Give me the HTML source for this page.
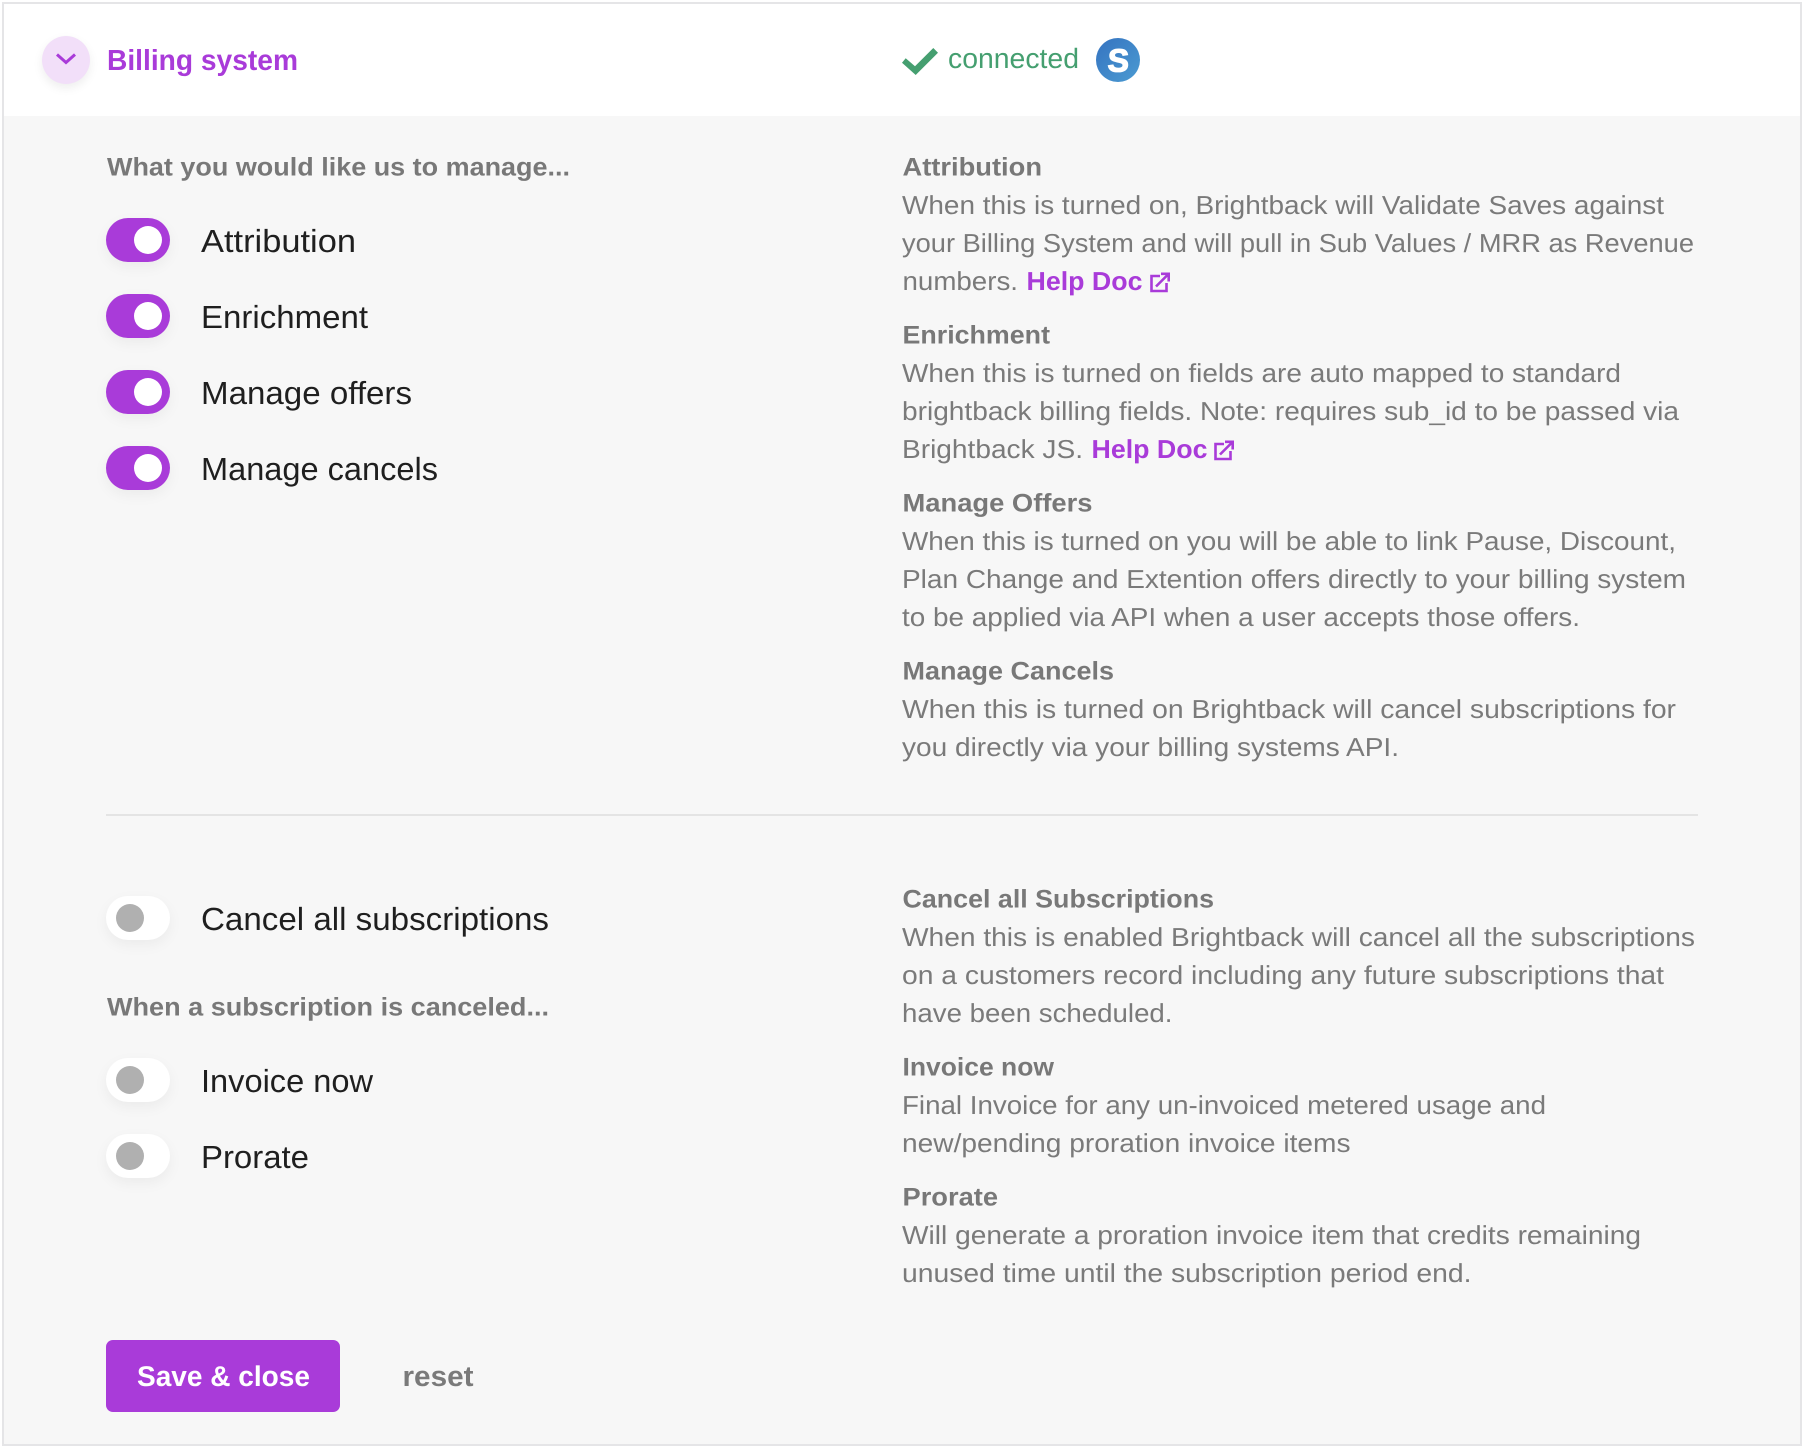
<!DOCTYPE html>
<html lang="en">
<head>
<meta charset="utf-8">
<title>Billing system</title>
<style>
html,body{margin:0;padding:0;width:1802px;height:1446px;overflow:hidden;background:#fff}
#panel{position:absolute;left:2px;top:2px;width:1796px;height:1440px;border:2px solid #e5e5e7;background:#f7f7f7}
#head{position:absolute;left:4px;top:4px;width:1796px;height:112px;background:#fff}
.t{position:absolute;left:106px;width:64px;height:44px;border-radius:22px;box-shadow:0 5px 14px rgba(0,0,0,.05)}
.t i{position:absolute;top:8px;width:28px;height:28px;border-radius:50%;display:block}
.on{background:#a93bd9}.on i{left:28px;background:#fff}
.off{background:#fff}.off i{left:10px;background:#b0b0b0}
#chev{position:absolute;left:42px;top:36px;width:48px;height:48px;border-radius:50%;background:#f2dff9;box-shadow:0 4px 10px rgba(0,0,0,.07)}
#btn{position:absolute;left:106px;top:1340px;width:234px;height:72px;border-radius:7px;background:#a93bd9}
svg{position:absolute;left:0;top:0}
text{font-family:"Liberation Sans",Arial,sans-serif;text-rendering:geometricPrecision}
.b{font-size:26px;fill:#7a7a7a}
.h{font-size:25.5px;font-weight:700;fill:#787878}
.l{font-size:32px;fill:#1f1f1f}
.p{font-size:26px;font-weight:700;fill:#a93bd9}
</style>
</head>
<body>
<div id="panel"></div>
<div id="head"></div>
<div id="chev"></div>
<div class="t on" style="top:218px"><i></i></div>
<div class="t on" style="top:294px"><i></i></div>
<div class="t on" style="top:370px"><i></i></div>
<div class="t on" style="top:446px"><i></i></div>
<div class="t off" style="top:896px"><i></i></div>
<div class="t off" style="top:1058px"><i></i></div>
<div class="t off" style="top:1134px"><i></i></div>
<div id="btn"></div>
<svg width="1802" height="1446" viewBox="0 0 1802 1446" xmlns="http://www.w3.org/2000/svg">
<defs>
<linearGradient id="g" x1="0" y1="0" x2="1" y2="1"><stop offset="0" stop-color="#3573c0"/><stop offset="1" stop-color="#4b9bd2"/></linearGradient>
</defs>

<path d="M57 54.5 L66 62.5 L75 54.5" fill="none" stroke="#a93bd9" stroke-width="3"/>
<text x="107" y="70" font-size="29" font-weight="700" fill="#a93bd9" textLength="191" lengthAdjust="spacingAndGlyphs">Billing system</text>

<polygon points="902,62.7 905.7,58.3 915,66.2 933.3,48 938,52.7 915.7,75" fill="#459f70"/>
<text x="948" y="68" font-size="28" fill="#459f70" textLength="131" lengthAdjust="spacingAndGlyphs">connected</text>
<circle cx="1118" cy="60" r="22" fill="url(#g)"/>
<text x="1118" y="71.5" font-size="32" font-weight="700" fill="#fff" stroke="#fff" stroke-width="1.2" text-anchor="middle" transform="translate(3 0) skewX(-2.5)">S</text>

<!-- left column -->
<text class="h" x="107" y="175.5" textLength="463" lengthAdjust="spacingAndGlyphs">What you would like us to manage...</text>
<text class="l" x="201" y="252" textLength="155" lengthAdjust="spacingAndGlyphs">Attribution</text>
<text class="l" x="201" y="328" textLength="167" lengthAdjust="spacingAndGlyphs">Enrichment</text>
<text class="l" x="201" y="404" textLength="211" lengthAdjust="spacingAndGlyphs">Manage offers</text>
<text class="l" x="201" y="480" textLength="237" lengthAdjust="spacingAndGlyphs">Manage cancels</text>
<text class="l" x="201" y="930" textLength="348" lengthAdjust="spacingAndGlyphs">Cancel all subscriptions</text>
<text class="h" x="107" y="1015.5" textLength="442" lengthAdjust="spacingAndGlyphs">When a subscription is canceled...</text>
<text class="l" x="201" y="1092" textLength="172" lengthAdjust="spacingAndGlyphs">Invoice now</text>
<text class="l" x="201" y="1168" textLength="108" lengthAdjust="spacingAndGlyphs">Prorate</text>

<!-- right column -->
<text class="h" x="902.5" y="175.5" textLength="139.5" lengthAdjust="spacingAndGlyphs">Attribution</text>
<text class="b" x="902" y="214" textLength="762" lengthAdjust="spacingAndGlyphs">When this is turned on, Brightback will Validate Saves against</text>
<text class="b" x="902" y="252" textLength="792" lengthAdjust="spacingAndGlyphs">your Billing System and will pull in Sub Values / MRR as Revenue</text>
<text class="b" x="902.5" y="290" textLength="115.5" lengthAdjust="spacingAndGlyphs">numbers.</text>
<text class="p" x="1026.5" y="290" textLength="116" lengthAdjust="spacingAndGlyphs">Help Doc</text>
<path d="M1160 276 H1151.5 V291 H1166.5 V283 M1156 286.5 L1167.5 275 M1161 273.8 H1168.7 V281.5" fill="none" stroke="#a93bd9" stroke-width="2.6"/>

<text class="h" x="902.5" y="343.5" textLength="147.5" lengthAdjust="spacingAndGlyphs">Enrichment</text>
<text class="b" x="902" y="382" textLength="719" lengthAdjust="spacingAndGlyphs">When this is turned on fields are auto mapped to standard</text>
<text class="b" x="902" y="420" textLength="777" lengthAdjust="spacingAndGlyphs">brightback billing fields. Note: requires sub_id to be passed via</text>
<text class="b" x="902" y="458" textLength="181" lengthAdjust="spacingAndGlyphs">Brightback JS.</text>
<text class="p" x="1091.5" y="458" textLength="116" lengthAdjust="spacingAndGlyphs">Help Doc</text>
<path transform="translate(64 168)" d="M1160 276 H1151.5 V291 H1166.5 V283 M1156 286.5 L1167.5 275 M1161 273.8 H1168.7 V281.5" fill="none" stroke="#a93bd9" stroke-width="2.6"/>

<text class="h" x="902.5" y="511.5" textLength="190" lengthAdjust="spacingAndGlyphs">Manage Offers</text>
<text class="b" x="902" y="550" textLength="774" lengthAdjust="spacingAndGlyphs">When this is turned on you will be able to link Pause, Discount,</text>
<text class="b" x="902" y="588" textLength="784" lengthAdjust="spacingAndGlyphs">Plan Change and Extention offers directly to your billing system</text>
<text class="b" x="902" y="626" textLength="678" lengthAdjust="spacingAndGlyphs">to be applied via API when a user accepts those offers.</text>

<text class="h" x="902.5" y="679.5" textLength="211.5" lengthAdjust="spacingAndGlyphs">Manage Cancels</text>
<text class="b" x="902" y="718" textLength="774" lengthAdjust="spacingAndGlyphs">When this is turned on Brightback will cancel subscriptions for</text>
<text class="b" x="902" y="756" textLength="497" lengthAdjust="spacingAndGlyphs">you directly via your billing systems API.</text>

<rect x="106" y="814" width="1592" height="2" fill="#e4e4e4"/>

<text class="h" x="902.5" y="907.5" textLength="311.5" lengthAdjust="spacingAndGlyphs">Cancel all Subscriptions</text>
<text class="b" x="902" y="946" textLength="793" lengthAdjust="spacingAndGlyphs">When this is enabled Brightback will cancel all the subscriptions</text>
<text class="b" x="902" y="984" textLength="762" lengthAdjust="spacingAndGlyphs">on a customers record including any future subscriptions that</text>
<text class="b" x="902" y="1022" textLength="270.5" lengthAdjust="spacingAndGlyphs">have been scheduled.</text>

<text class="h" x="902.5" y="1075.5" textLength="151.5" lengthAdjust="spacingAndGlyphs">Invoice now</text>
<text class="b" x="902" y="1114" textLength="644" lengthAdjust="spacingAndGlyphs">Final Invoice for any un-invoiced metered usage and</text>
<text class="b" x="902" y="1152" textLength="448.5" lengthAdjust="spacingAndGlyphs">new/pending proration invoice items</text>

<text class="h" x="902.5" y="1205.5" textLength="95.5" lengthAdjust="spacingAndGlyphs">Prorate</text>
<text class="b" x="902" y="1244" textLength="739" lengthAdjust="spacingAndGlyphs">Will generate a proration invoice item that credits remaining</text>
<text class="b" x="902" y="1282" textLength="569.5" lengthAdjust="spacingAndGlyphs">unused time until the subscription period end.</text>

<text x="137" y="1386" font-size="28.5" font-weight="700" fill="#fff" textLength="173" lengthAdjust="spacingAndGlyphs">Save &amp; close</text>
<text x="402.5" y="1386" font-size="28.5" font-weight="700" fill="#7a7a7a" textLength="71" lengthAdjust="spacingAndGlyphs">reset</text>
</svg>
</body>
</html>
